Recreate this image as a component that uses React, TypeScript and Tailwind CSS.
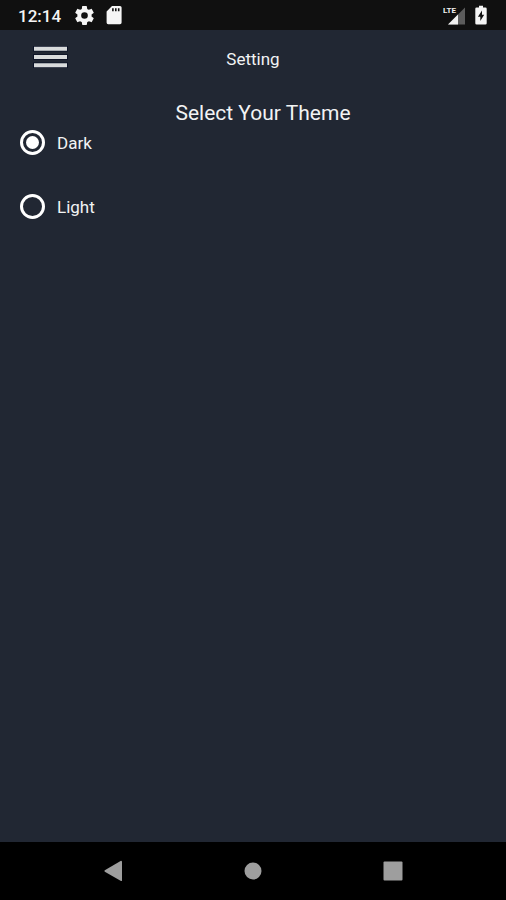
import React, { useState } from 'react';

type Theme = 'dark' | 'light';

interface ThemeOptionProps {
  value: Theme;
  label: string;
  selected: Theme;
  onSelect: (theme: Theme) => void;
}

const GearIcon = () => (
  <svg viewBox="2 2 20 20" className="w-[19px] h-[19px]" fill="currentColor" aria-hidden="true">
    <path d="M19.43 12.98c.04-.32.07-.64.07-.98s-.03-.66-.07-.98l2.11-1.65c.19-.15.24-.42.12-.64l-2-3.46c-.12-.22-.39-.3-.61-.22l-2.49 1c-.52-.4-1.08-.73-1.69-.98l-.38-2.65A.488.488 0 0 0 14 2h-4c-.25 0-.46.18-.49.42l-.38 2.65c-.61.25-1.17.59-1.69.98l-2.49-1c-.23-.09-.49 0-.61.22l-2 3.46c-.13.22-.07.49.12.64l2.11 1.65c-.04.32-.07.65-.07.98s.03.66.07.98l-2.11 1.65c-.19.15-.24.42-.12.64l2 3.46c.12.22.39.3.61.22l2.49-1c.52.4 1.08.73 1.69.98l.38 2.65c.03.24.24.42.49.42h4c.25 0 .46-.18.49-.42l.38-2.65c.61-.25 1.17-.59 1.69-.98l2.49 1c.23.09.49 0 .61-.22l2-3.46c.12-.22.07-.49-.12-.64l-2.11-1.65zM12 15.5a3.5 3.5 0 1 1 0-7 3.5 3.5 0 0 1 0 7z" />
  </svg>
);

const SdCardIcon = () => (
  <svg viewBox="0 0 16 20" className="w-[16px] h-[20px]" fill="currentColor" aria-hidden="true">
    <path fillRule="evenodd" d="M6 1h8a1.6 1.6 0 0 1 1.600 1.600v15a1.600 1.600 0 0 1-1.600 1.600H2.200a1.600 1.600 0 0 1-1.600-1.600V6.500zM6.100 3.200v3h1.600v-3zM9 3.200v3h1.600v-3zM11.900 3.200v3h1.600v-3z" />
  </svg>
);

const SignalIcon = () => (
  <svg viewBox="0 0 23 20" className="w-[23px] h-[20px]" aria-hidden="true">
    <path d="M22 2.500v17H5z" fill="#5c5c5c" />
    <path d="M15 9.500v10H5z" fill="#f2f2f2" />
    <text x="0" y="8" fontSize="8" fontWeight="700" fill="#f2f2f2" stroke="#101010" strokeWidth="2" paintOrder="stroke">LTE</text>
  </svg>
);

const BatteryIcon = () => (
  <svg viewBox="0 0 12 20" className="w-[12px] h-[20px]" fill="currentColor" aria-hidden="true">
    <path fillRule="evenodd" d="M4 .8h4v1.700h2.400A1.300 1.300 0 0 1 11.700 3.800v14.400a1.300 1.300 0 0 1-1.300 1.300H1.600A1.300 1.300 0 0 1 .3 18.200V3.800a1.300 1.300 0 0 1 1.300-1.300H4zM7 5.500 2.900 11.800h2.400v4.200L9.200 9.700H7z" />
  </svg>
);

const StatusBar = () => (
  <div className="flex items-center justify-between h-[30px] pl-[18px] pr-[19px] bg-[#101010] text-[#f5f5f5]">
    <div className="flex items-center">
      <span className="pt-0.5 text-[17px] leading-5 font-medium">12:14</span>
      <div className="flex items-center gap-3 ml-3.5">
        <GearIcon />
        <SdCardIcon />
      </div>
    </div>
    <div className="flex items-center gap-[9px]">
      <SignalIcon />
      <BatteryIcon />
    </div>
  </div>
);

const Header = () => (
  <header className="grid grid-cols-[1fr_auto_1fr] items-center h-14 px-[34px]">
    <button type="button" aria-label="Open menu" className="justify-self-start">
      <svg viewBox="0 0 35 24" className="w-[35px] h-6 -ml-px" aria-hidden="true">
        <path d="M0 2.700h35M0 11h35M0 19.200h35" stroke="#0b1226" strokeWidth="5.400" />
        <path d="M1 2.700h33M1 11h33M1 19.200h33" stroke="#d9dbdc" strokeWidth="4" />
      </svg>
    </button>
    <h1 className="pt-0.5 text-[17px] leading-6">Setting</h1>
  </header>
);

const ThemeOption: React.FC<ThemeOptionProps> = ({ value, label, selected, onSelect }) => (
  <label className="flex items-center gap-3 w-fit h-8 text-[17px] leading-6">
    <input
      type="radio"
      name="theme"
      value={value}
      checked={selected === value}
      onChange={() => onSelect(value)}
      className="appearance-none grid place-items-center w-[25px] h-[25px] rounded-full border-3 border-white before:w-[13px] before:h-[13px] before:rounded-full checked:before:bg-white"
    />
    <span className="pt-0.5">{label}</span>
  </label>
);

const NavigationBar = () => (
  <nav className="flex items-center justify-between h-[58px] px-[103px] bg-black text-[#9e9e9e]">
    <button type="button" aria-label="Back">
      <svg viewBox="0 0 20 22" className="w-5 h-[22px]" fill="currentColor">
        <path d="M18 .8q1 0 1 1v18.400q0 1.200-1 .7L1.800 11.800q-.9-.8 0-1.500z" />
      </svg>
    </button>
    <button type="button" aria-label="Home">
      <svg viewBox="0 0 18 18" className="w-[18px] h-[18px]" fill="currentColor">
        <circle cx="9" cy="9" r="8.500" />
      </svg>
    </button>
    <button type="button" aria-label="Recent apps">
      <svg viewBox="0 0 20 20" className="w-5 h-5" fill="currentColor">
        <rect x=".5" y=".5" width="19" height="19" rx="1" />
      </svg>
    </button>
  </nav>
);

const App: React.FC = () => {
  const [theme, setTheme] = useState<Theme>('dark');

  return (
    <div className="flex flex-col min-h-screen bg-[#212733] text-[#f2f3f4] font-['Roboto',sans-serif]">
      <StatusBar />
      <Header />
      <main className="flex-1 pl-5 pt-3.5">
        <h2 id="theme-heading" className="text-center text-[21px] leading-[26px]">Select Your Theme</h2>
        <div role="radiogroup" aria-labelledby="theme-heading" className="flex flex-col gap-8">
          <ThemeOption value="dark" label="Dark" selected={theme} onSelect={setTheme} />
          <ThemeOption value="light" label="Light" selected={theme} onSelect={setTheme} />
        </div>
      </main>
      <NavigationBar />
    </div>
  );
};

export default App;
